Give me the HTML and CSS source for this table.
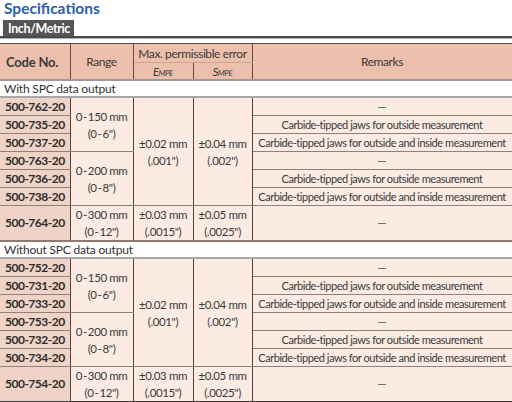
FILE: index.html
```html
<!DOCTYPE html>
<html>
<head>
<meta charset="utf-8">
<link rel="stylesheet" href="styles.css">
</head>
<body>
<div class="page">
  <h1 class="title">Specifications</h1>
  <div class="tabbar"><span class="tab">Inch/Metric</span></div>
  <div class="rule"></div>
  <table class="spec">
    <colgroup>
      <col class="c-code"><col class="c-range"><col class="c-e"><col class="c-s"><col class="c-rem">
    </colgroup>
    <thead>
      <tr class="h1">
        <th rowspan="2" class="hcode">Code No.</th>
        <th rowspan="2">Range</th>
        <th colspan="2" class="hmax">Max. permissible error</th>
        <th rowspan="2" class="hrem">Remarks</th>
      </tr>
      <tr class="h2">
        <th class="sub"><i>E<span class="sc">MPE</span></i></th>
        <th class="sub"><i>S<span class="sc">MPE</span></i></th>
      </tr>
    </thead>
    <tbody>
      <tr class="label"><td colspan="5">With SPC data output</td></tr>
      <tr class="first">
        <td class="code">500-762-20</td>
        <td rowspan="3" class="val">0&thinsp;-&thinsp;150 mm<br>(0&thinsp;-&thinsp;6")</td>
        <td rowspan="6" class="val">±0.02 mm<br>(.001")</td>
        <td rowspan="6" class="val">±0.04 mm<br>(.002")</td>
        <td class="rem dash">—</td>
      </tr>
      <tr><td class="code">500-735-20</td><td class="rem">Carbide-tipped jaws for outside measurement</td></tr>
      <tr><td class="code">500-737-20</td><td class="rem">Carbide-tipped jaws for outside and inside measurement</td></tr>
      <tr>
        <td class="code">500-763-20</td>
        <td rowspan="3" class="val">0&thinsp;-&thinsp;200 mm<br>(0&thinsp;-&thinsp;8")</td>
        <td class="rem dash">—</td>
      </tr>
      <tr><td class="code">500-736-20</td><td class="rem">Carbide-tipped jaws for outside measurement</td></tr>
      <tr><td class="code">500-738-20</td><td class="rem">Carbide-tipped jaws for outside and inside measurement</td></tr>
      <tr class="tall">
        <td class="code">500-764-20</td>
        <td class="val">0&thinsp;-&thinsp;300 mm<br>(0&thinsp;-&thinsp;12")</td>
        <td class="val">±0.03 mm<br>(.0015")</td>
        <td class="val">±0.05 mm<br>(.0025")</td>
        <td class="rem dash">—</td>
      </tr>
      <tr class="label"><td colspan="5">Without SPC data output</td></tr>
      <tr class="first">
        <td class="code">500-752-20</td>
        <td rowspan="3" class="val">0&thinsp;-&thinsp;150 mm<br>(0&thinsp;-&thinsp;6")</td>
        <td rowspan="6" class="val">±0.02 mm<br>(.001")</td>
        <td rowspan="6" class="val">±0.04 mm<br>(.002")</td>
        <td class="rem dash">—</td>
      </tr>
      <tr><td class="code">500-731-20</td><td class="rem">Carbide-tipped jaws for outside measurement</td></tr>
      <tr><td class="code">500-733-20</td><td class="rem">Carbide-tipped jaws for outside and inside measurement</td></tr>
      <tr>
        <td class="code">500-753-20</td>
        <td rowspan="3" class="val">0&thinsp;-&thinsp;200 mm<br>(0&thinsp;-&thinsp;8")</td>
        <td class="rem dash">—</td>
      </tr>
      <tr><td class="code">500-732-20</td><td class="rem">Carbide-tipped jaws for outside measurement</td></tr>
      <tr><td class="code">500-734-20</td><td class="rem">Carbide-tipped jaws for outside and inside measurement</td></tr>
      <tr class="tall last">
        <td class="code">500-754-20</td>
        <td class="val">0&thinsp;-&thinsp;300 mm<br>(0&thinsp;-&thinsp;12")</td>
        <td class="val">±0.03 mm<br>(.0015")</td>
        <td class="val">±0.05 mm<br>(.0025")</td>
        <td class="rem dash">—</td>
      </tr>
    </tbody>
  </table>
</div>
</body>
</html>
```

FILE: styles.css
```css
html, body {
  margin: 0;
  padding: 0;
  background: #ffffff;
}
body {
  font-family: Lato, "Liberation Sans", sans-serif;
  color: #3a3a3a;
}
.page {
  width: 512px;
}
.title {
  margin: 0;
  padding-left: 4px;
  height: 18px;
  font-size: 15.5px;
  line-height: 17px;
  font-weight: bold;
  color: #2d5fa9;
}
.tabbar {
  display: flex;
  margin-top: 2px;
  height: 16px;
  padding-left: 3px;
}
.tab {
  height: 16px;
  line-height: 17px;
  padding: 0 4px 0 5px;
  background: #555555;
  color: #ffffff;
  font-weight: bold;
  font-size: 12.5px;
  letter-spacing: -0.4px;
}
.rule {
  height: 2px;
  background: #4a4a4a;
  border-bottom: 1px solid #b0b0b0;
  margin-bottom: 4px;
}
.spec {
  width: 512px;
  border-collapse: collapse;
  table-layout: fixed;
  font-size: 12px;
  white-space: nowrap;
}
.c-code { width: 70px; }
.c-range { width: 63px; }
.c-e { width: 60px; }
.c-s { width: 59px; }
.c-rem { width: 260px; }
.spec th {
  background: #ecc0ad;
  font-weight: normal;
  color: #3a3a3a;
  border-left: 1px solid #6a4a3e;
  border-right: 1px solid #6a4a3e;
  border-top: 1px solid #5a4a44;
  padding: 0;
  text-align: center;
  font-size: 12px;
  letter-spacing: -0.4px;
}
.spec .h1 th { height: 18px; }
.spec .h2 th { height: 16px; border-bottom: 2px solid #9a9a9a; }
.spec .h1 th[rowspan] { border-bottom: 2px solid #9a9a9a; }
.spec th.hcode {
  border-left: none;
  text-align: left;
  padding-left: 6px;
  font-weight: bold;
  font-size: 13px;
  letter-spacing: -0.2px;
}
.spec th.hmax { border-bottom: 1px solid #c9a595; }
.spec th.sub {
  font-size: 11px;
  border-top: none;
  letter-spacing: -0.4px;
}
.spec th.sub .sc { font-size: 8px; }
.spec td {
  padding: 0;
  border-left: 1px solid #5a4038;
  border-right: 1px solid #5a4038;
  border-top: 1px solid #8f8079;
  border-bottom: 1px solid #8f8079;
  background: #fbebe3;
  text-align: center;
  height: 17px;
  line-height: 16px;
}
.spec td.code {
  border-left: none;
  background: #efd3c6;
  font-weight: bold;
  font-size: 12px;
  letter-spacing: -0.5px;
  color: #2e2e2e;
  text-align: left;
  padding-left: 5px;
}
.spec td.val {
  font-size: 11.5px;
  line-height: 17px;
  letter-spacing: -0.4px;
}
.spec td.rem {
  font-size: 11px;
  letter-spacing: -0.45px;
}
.spec td.dash {
  letter-spacing: 0;
  font-size: 12px;
  color: #555555;
}
.spec tr.label td {
  background: #ffffff;
  border-left: none;
  border-right: none;
  text-align: left;
  padding-left: 4px;
  height: 15px;
  line-height: 15px;
  font-size: 12px;
  letter-spacing: -0.2px;
  color: #333333;
}
.spec tr.first td {
  border-top: 2px solid #a8a8a8;
}
.spec tr.tall td {
  height: 32px;
  line-height: 16px;
  border-bottom: 2px solid #8a7a72;
}
.spec tr.tall td.val {
  line-height: 17px;
}
.spec tr.last td {
  border-bottom: 2px solid #4a3a35;
}
```
